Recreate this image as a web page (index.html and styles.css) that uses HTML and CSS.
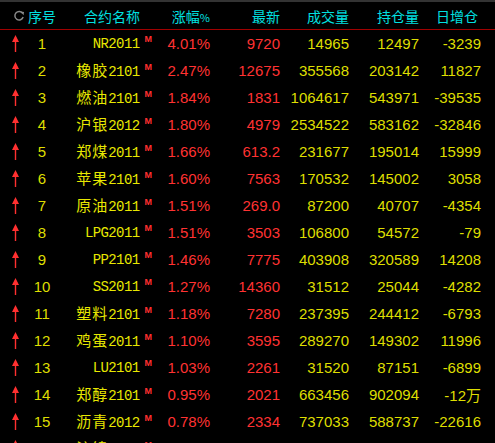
FILE: index.html
```html
<!DOCTYPE html>
<html lang="zh">
<head>
<meta charset="utf-8">
<link rel="stylesheet" href="styles.css">
</head>
<body>
<div class="board">
  <div class="row head">
    <div class="h-seq"><svg class="refresh" width="13" height="12" viewBox="0 0 13 12"><path d="M10.5 3.2A4.6 4.6 0 1 0 11 7.2" fill="none" stroke="#8a8a8a" stroke-width="1.6"/><path d="M8.2 1.2L12 1.6L11.4 5.2Z" fill="#8a8a8a"/></svg><span>序号</span></div>
    <div class="h-name">合约名称</div>
    <div class="h-r">涨幅<small>%</small></div>
    <div class="h-r">最新</div>
    <div class="h-r">成交量</div>
    <div class="h-r">持仓量</div>
    <div class="h-r h-last">日增仓</div>
  </div>
  <div class="rows" id="rows"></div>
</div>
<script src="app.js"></script>
</body>
</html>
```

FILE: app.js
```js
const data = [
  ["1","","NR2011","4.01%","9720","14965","12497","-3239"],
  ["2","橡胶","2101","2.47%","12675","355568","203142","11827"],
  ["3","燃油","2101","1.84%","1831","1064617","543971","-39535"],
  ["4","沪银","2012","1.80%","4979","2534522","583162","-32846"],
  ["5","郑煤","2011","1.66%","613.2","231677","195014","15999"],
  ["6","苹果","2101","1.60%","7563","170532","145002","3058"],
  ["7","原油","2011","1.51%","269.0","87200","40707","-4354"],
  ["8","","LPG2011","1.51%","3503","106800","54572","-79"],
  ["9","","PP2101","1.46%","7775","403908","320589","14208"],
  ["10","","SS2011","1.27%","14360","31512","25044","-4282"],
  ["11","塑料","2101","1.18%","7280","237395","244412","-6793"],
  ["12","鸡蛋","2011","1.10%","3595","289270","149302","11996"],
  ["13","","LU2101","1.03%","2261","31520","87151","-6899"],
  ["14","郑醇","2101","0.95%","2021","663456","902094","-12万"],
  ["15","沥青","2012","0.78%","2334","737033","588737","-22616"],
  ["16","沪镍","2012","0.75%","12350","185260","96512","-3021"]
];
const arrow = '<svg width="7" height="17" viewBox="0 0 7 17"><path d="M3.5 0L7 7H4.2V17H2.8V7H0Z" fill="#ff3030"/></svg>';
const rows = document.getElementById("rows");
rows.innerHTML = data.map(r => {
  const daily = r[7].replace("万", '<span class="wan">万</span>');
  return `<div class="row">
    <div class="arrow">${arrow}</div>
    <div class="seq">${r[0]}</div>
    <div class="name">${r[1] ? `<span class="cn">${r[1]}</span>` : ""}<span class="code">${r[2]}</span><span class="m">M</span></div>
    <div class="num red">${r[3]}</div>
    <div class="num red">${r[4]}</div>
    <div class="num yel">${r[5]}</div>
    <div class="num yel">${r[6]}</div>
    <div class="num yel last">${daily}</div>
  </div>`;
}).join("");
```

FILE: styles.css
```css
html, body {
  margin: 0;
  padding: 0;
  background: #000;
  overflow: hidden;
}
.board {
  width: 495px;
  height: 443px;
  border-top: 2px solid #333;
  box-sizing: border-box;
  font-family: "Liberation Sans", "Noto Sans CJK SC", sans-serif;
}
.row {
  display: grid;
  grid-template-columns: 28px 28px 104px 50px 70px 69px 70px 62px;
  height: 27px;
  align-items: center;
  white-space: nowrap;
}
.row.head {
  height: 27px;
  border-bottom: 1px solid #a00000;
  color: #00e0e0;
  font-family: "Noto Sans CJK SC", sans-serif;
  font-size: 14px;
}
.h-seq {
  grid-column: 1 / span 2;
  display: flex;
  align-items: center;
  padding-left: 13px;
  gap: 3px;
}
.h-name {
  text-align: right;
  padding-right: 20px;
}
.h-r {
  text-align: right;
}
.h-r small {
  font-size: 11px;
}
.h-last {
  padding-right: 3px;
}
.arrow {
  display: flex;
  justify-content: center;
  padding-left: 2px;
}
.arrow svg {
  display: block;
}
.seq {
  text-align: center;
  color: #dede00;
  font-size: 15px;
}
.name {
  display: flex;
  justify-content: flex-end;
  align-items: baseline;
  padding-right: 8px;
  color: #e8e800;
}
.cn {
  font-family: "Noto Sans CJK SC", sans-serif;
  font-size: 15px;
  letter-spacing: 1px;
  line-height: 1;
}
.code {
  font-family: "Liberation Mono", monospace;
  font-size: 14px;
  letter-spacing: -0.6px;
}
.m {
  color: #ff3030;
  font-size: 9px;
  font-weight: bold;
  margin-left: 5px;
  position: relative;
  top: -6px;
}
.num {
  text-align: right;
  font-size: 15px;
}
.red {
  color: #ff3232;
}
.yel {
  color: #dede00;
}
.wan {
  font-family: "Noto Sans CJK SC", sans-serif;
  font-size: 15px;
}
```
